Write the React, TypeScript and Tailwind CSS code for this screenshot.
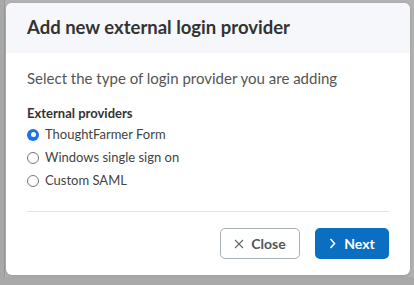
import React from "react";

export default function App() {
  const font = { fontFamily: 'Lato, "Open Sans", "Liberation Sans", sans-serif' };
  return (
    <div className="w-[414px] h-[285px] bg-[#b2b2b2] overflow-hidden relative" style={font}>
      <div className="absolute left-0 top-0 h-full w-[5px] bg-[#a8a8a8] border-r border-[#9a9a9a]" />
      <div className="absolute left-0 top-[277px] w-full h-[8px] bg-[#a9a9a9]" />
      <div className="relative ml-[6px] mt-[3px] w-[404px] h-[272px] bg-white rounded-[6px] overflow-hidden flex flex-col shadow-[0_1px_3px_rgba(0,0,0,0.15)]">
        <div className="h-[50px] bg-[#f5f7fa] flex items-center px-[21px]">
          <h1 className="text-[18.5px] font-bold text-[#333]">Add new external login provider</h1>
        </div>
        <div className="px-[21px] pt-[15px] flex flex-col">
          <p className="text-[15px] text-[#555] leading-[20px]">Select the type of login provider you are adding</p>
          <div className="mt-[17px] text-[13px] font-bold text-[#333] leading-[16px]">External providers</div>
          <div className="mt-[2px] flex flex-col">
            {["ThoughtFarmer Form", "Windows single sign on", "Custom SAML"].map((l, i) => (
              <label key={l} className="flex items-center h-[23px] leading-[23px] text-[13px] text-[#444]">
                {i === 0 ? (
                  <span className="w-[12px] h-[12px] rounded-full bg-[#1a73e8] flex items-center justify-center">
                    <span className="w-[5px] h-[5px] rounded-full bg-white" />
                  </span>
                ) : (
                  <span className="w-[12px] h-[12px] rounded-full border border-[#767676] bg-white" />
                )}
                <span className="ml-[6px]">{l}</span>
              </label>
            ))}
          </div>
          <div className="mt-[19px] h-px bg-[#dfe5ec]" />
          <div className="mt-[16px] flex justify-end gap-[15px]">
            <button className="h-[31px] w-[80px] rounded-[5px] border border-[#a9b0b8] bg-white flex items-center justify-center gap-[7px] text-[14px] font-bold text-[#555]">
              <svg width="10" height="10" viewBox="0 0 10 10" stroke="#666" strokeWidth="1.1" fill="none">
                <path d="M1 1 L9 9 M9 1 L1 9" />
              </svg>
              Close
            </button>
            <button className="h-[31px] w-[74px] rounded-[5px] bg-[#0b6fc1] flex items-center justify-center gap-[8px] text-[14px] font-bold text-white">
              <svg width="7" height="11" viewBox="0 0 7 11" stroke="white" strokeWidth="1.6" fill="none">
                <path d="M1.5 1 L5.5 5.5 L1.5 10" />
              </svg>
              Next
            </button>
          </div>
        </div>
      </div>
    </div>
  );
}
